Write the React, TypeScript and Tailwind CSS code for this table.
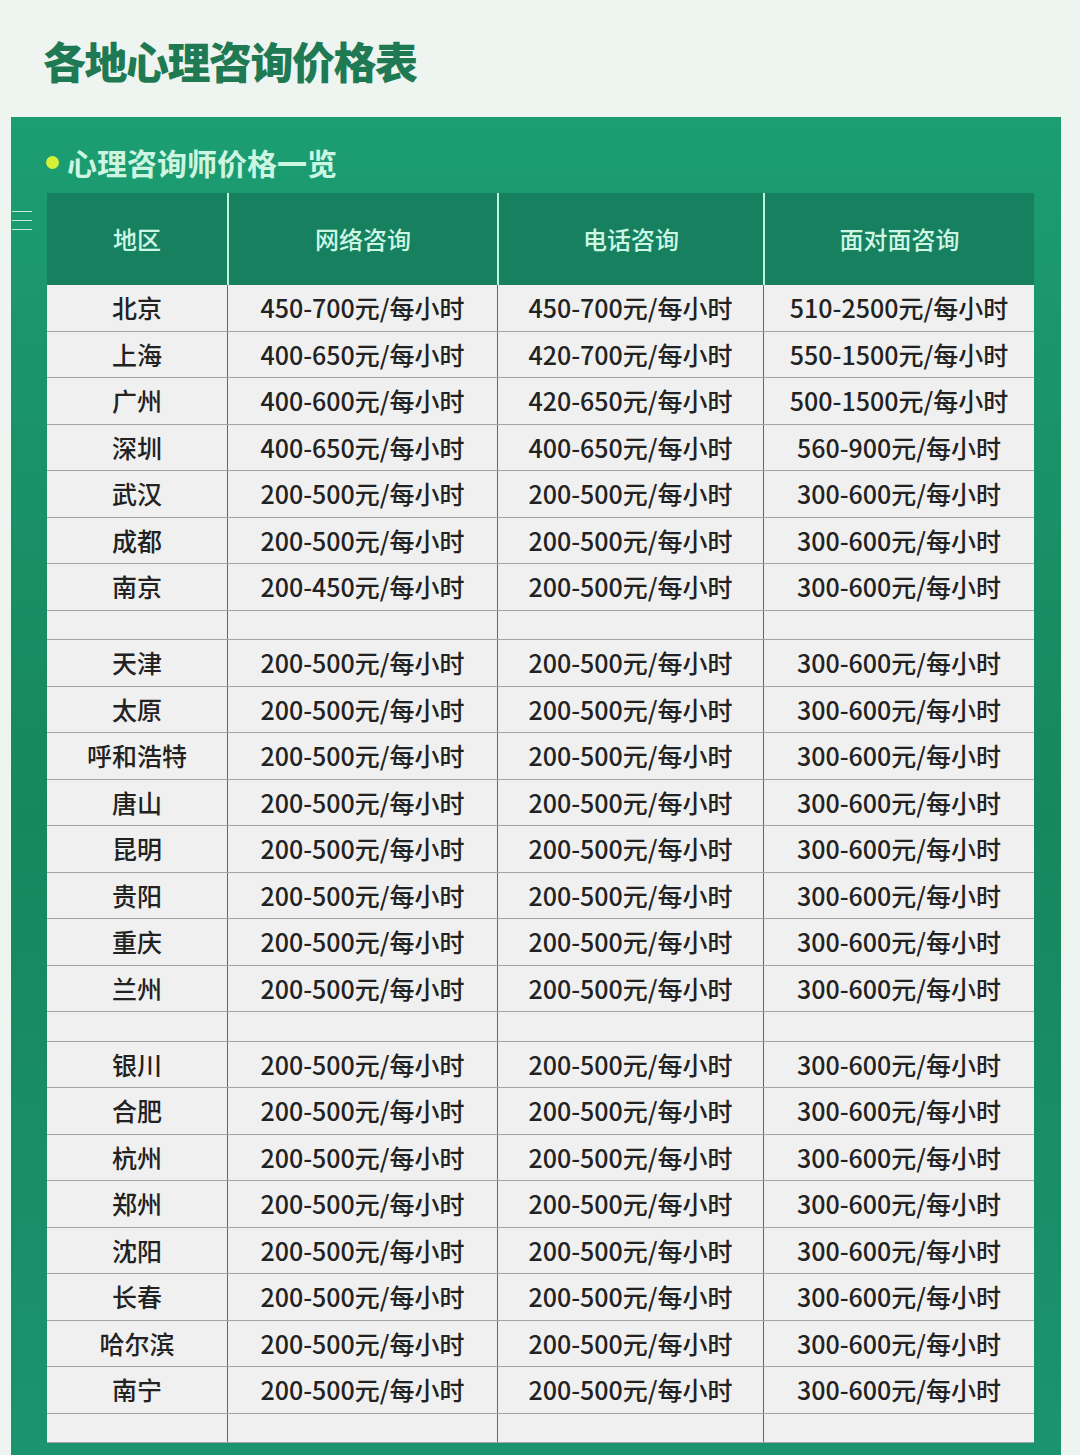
import React from "react";

type Row = [string, string, string, string] | null;

const rows: Row[] = [
  ["北京", "450-700元/每小时", "450-700元/每小时", "510-2500元/每小时"],
  ["上海", "400-650元/每小时", "420-700元/每小时", "550-1500元/每小时"],
  ["广州", "400-600元/每小时", "420-650元/每小时", "500-1500元/每小时"],
  ["深圳", "400-650元/每小时", "400-650元/每小时", "560-900元/每小时"],
  ["武汉", "200-500元/每小时", "200-500元/每小时", "300-600元/每小时"],
  ["成都", "200-500元/每小时", "200-500元/每小时", "300-600元/每小时"],
  ["南京", "200-450元/每小时", "200-500元/每小时", "300-600元/每小时"],
  null,
  ["天津", "200-500元/每小时", "200-500元/每小时", "300-600元/每小时"],
  ["太原", "200-500元/每小时", "200-500元/每小时", "300-600元/每小时"],
  ["呼和浩特", "200-500元/每小时", "200-500元/每小时", "300-600元/每小时"],
  ["唐山", "200-500元/每小时", "200-500元/每小时", "300-600元/每小时"],
  ["昆明", "200-500元/每小时", "200-500元/每小时", "300-600元/每小时"],
  ["贵阳", "200-500元/每小时", "200-500元/每小时", "300-600元/每小时"],
  ["重庆", "200-500元/每小时", "200-500元/每小时", "300-600元/每小时"],
  ["兰州", "200-500元/每小时", "200-500元/每小时", "300-600元/每小时"],
  null,
  ["银川", "200-500元/每小时", "200-500元/每小时", "300-600元/每小时"],
  ["合肥", "200-500元/每小时", "200-500元/每小时", "300-600元/每小时"],
  ["杭州", "200-500元/每小时", "200-500元/每小时", "300-600元/每小时"],
  ["郑州", "200-500元/每小时", "200-500元/每小时", "300-600元/每小时"],
  ["沈阳", "200-500元/每小时", "200-500元/每小时", "300-600元/每小时"],
  ["长春", "200-500元/每小时", "200-500元/每小时", "300-600元/每小时"],
  ["哈尔滨", "200-500元/每小时", "200-500元/每小时", "300-600元/每小时"],
  ["南宁", "200-500元/每小时", "200-500元/每小时", "300-600元/每小时"],
  null,
];

const font = { fontFamily: '"Noto Sans CJK SC", "Noto Sans", sans-serif' };

export default function App() {
  return (
    <div
      className="w-[1080px] h-[1455px] overflow-hidden bg-[#eef5f1] relative"
      style={font}
    >
      <h1 className="pl-[43px] pt-[30px] h-[117px] text-[43px] leading-[60px] font-black text-[#1f7a54] tracking-[-1.5px]">
        各地心理咨询价格表
      </h1>

      {/* left decorative lines */}
      <div className="absolute left-[12px] top-[211px] flex flex-col gap-[8px]">
        <div className="w-[20px] h-[1px] bg-[#bfe9d6]" />
        <div className="w-[20px] h-[1px] bg-[#bfe9d6]" />
        <div className="w-[20px] h-[1px] bg-[#bfe9d6]" />
      </div>

      <div className="ml-[11px] w-[1050px] h-[1400px] bg-gradient-to-b from-[#1c9d72] via-[#17875f] to-[#1b9570] pl-[36px] pt-[24px]">
        <div className="flex items-center h-[42px] mb-[10px]">
          <span className="w-[13px] h-[13px] rounded-full bg-[#d7f03a] mr-[8px] -ml-[1px]" />
          <span className="text-[30px] font-bold text-[#cdf6e2] leading-[42px]">
            心理咨询师价格一览
          </span>
        </div>

        <div className="w-[987px] bg-[#f0f0f0] text-[#222]">
          <div className="grid grid-cols-[180px_270px_266px_271px] h-[92px] bg-[#17805f] text-[#cdf7e5] text-[24px] font-medium">
            <div className="flex items-center justify-center">地区</div>
            <div className="flex items-center justify-center border-l-2 border-[#bff3dd]">网络咨询</div>
            <div className="flex items-center justify-center border-l-2 border-[#bff3dd]">电话咨询</div>
            <div className="flex items-center justify-center border-l-2 border-[#bff3dd]">面对面咨询</div>
          </div>
          {rows.map((r, i) =>
            r ? (
              <div
                key={i}
                className="grid grid-cols-[180px_270px_266px_271px] h-[46.5px] border-b-[1.5px] border-[#a4a4a4] text-[25px] font-medium"
              >
                <div className="flex items-center justify-center">{r[0]}</div>
                <div className="flex items-center justify-center border-l border-[#666]">{r[1]}</div>
                <div className="flex items-center justify-center border-l border-[#666]">{r[2]}</div>
                <div className="flex items-center justify-center border-l border-[#666]">{r[3]}</div>
              </div>
            ) : (
              <div
                key={i}
                className="grid grid-cols-[180px_270px_266px_271px] h-[29.5px] border-b-[1.5px] border-[#a4a4a4]"
              >
                <div />
                <div className="border-l border-[#666]" />
                <div className="border-l border-[#666]" />
                <div className="border-l border-[#666]" />
              </div>
            )
          )}
        </div>
      </div>
    </div>
  );
}
